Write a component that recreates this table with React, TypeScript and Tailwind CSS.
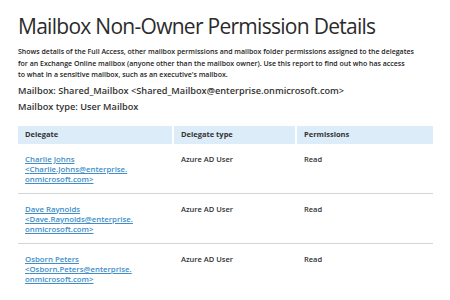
const rows = [
  { name: "Charlie Johns", email: "Charlie.Johns@enterprise.", domain: "onmicrosoft.com" },
  { name: "Dave Raynolds", email: "Dave.Raynolds@enterprise.", domain: "onmicrosoft.com" },
  { name: "Osborn Peters", email: "Osborn.Peters@enterprise.", domain: "onmicrosoft.com" },
];

export default function App() {
  return (
    <div className="w-[450px] h-[300px] overflow-hidden bg-white text-[#333] font-['Open_Sans',sans-serif] px-[18px] pt-[11px]">
      <h1 className="text-[21px] leading-[30px] font-normal tracking-[-0.72px] whitespace-nowrap text-[#2b2b2b]">
        Mailbox Non-Owner Permission Details
      </h1>

      <p className="mt-[5px] text-[7px] leading-[11.5px] font-semibold text-[#222] whitespace-nowrap">
        Shows details of the Full Access, other mailbox permissions and mailbox folder permissions assigned to the delegates
        <br />
        for an Exchange Online mailbox (anyone other than the mailbox owner). Use this report to find out who has access
        <br />
        to what in a sensitive mailbox, such as an executive's mailbox.
      </p>

      <div className="mt-[2px] text-[9.2px] font-semibold leading-[16px] text-[#333]">
        <div>Mailbox: Shared_Mailbox &lt;Shared_Mailbox@enterprise.onmicrosoft.com&gt;</div>
        <div>Mailbox type: User Mailbox</div>
      </div>

      <div className="mt-[11px] w-[415px]">
        <div className="flex h-[18px] items-center text-[7.5px] font-bold text-[#333]">
          <div className="w-[154px] h-full flex items-center pl-[7px] bg-[#dcecf8]">Delegate</div>
          <div className="w-[121px] h-full flex items-center pl-[7px] ml-[2px] bg-[#dcecf8]">Delegate type</div>
          <div className="flex-1 h-full flex items-center pl-[7px] ml-[2px] bg-[#dcecf8]">Permissions</div>
        </div>

        {rows.map((r, i) => (
          <div
            key={r.name}
            className={`flex text-[7.5px] leading-[10px] pt-[10px] h-[50px] ${i < rows.length - 1 ? "border-b border-[#d4d4d4]" : ""}`}
          >
            <div className="w-[156px] pl-[7px] font-semibold text-[7.8px] text-[#3d8ec9] underline">
              <div>{r.name}</div>
              <div>&lt;{r.email}</div>
              <div>{r.domain}&gt;</div>
            </div>
            <div className="w-[123px] pl-[7px] font-semibold text-[#333]">Azure AD User</div>
            <div className="flex-1 pl-[7px] font-semibold text-[#333]">Read</div>
          </div>
        ))}
      </div>
    </div>
  );
}
